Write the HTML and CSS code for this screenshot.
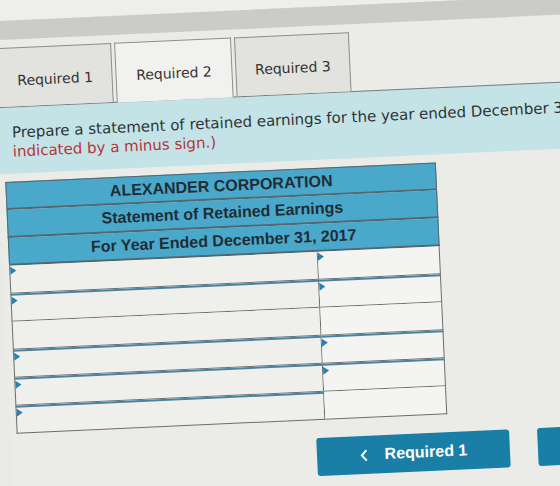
FILE: index.html
```html
<!doctype html>
<html>
<head>
<meta charset="utf-8">
<title>Required 2</title>
<link rel="stylesheet" href="styles.css">
</head>

<body>
<div class="screen">
	<div class="top-strip"></div>
	<div class="band"></div>

	<div class="tabs">
		<div class="tab">Required 1</div>
		<div class="tab active">Required 2</div>
		<div class="tab">Required 3</div>
	</div>

	<div class="prompt">
		Prepare a statement of retained earnings for the year ended December 31, 2017. <span class="note">(Amounts to be deducted should be</span><br>
		<span class="note">indicated by a minus sign.)</span>
	</div>

	<div class="sheet">
		<div class="head-row">ALEXANDER CORPORATION</div>
		<div class="head-row">Statement of Retained Earnings</div>
		<div class="head-row">For Year Ended December 31, 2017</div>
		<div class="rows">
			<div class="cell label sel"></div><div class="cell amount sel"></div>
			<div class="cell label sel"></div><div class="cell amount sel"></div>
			<div class="cell label"></div><div class="cell amount"></div>
			<div class="cell label sel"></div><div class="cell amount sel"></div>
			<div class="cell label sel"></div><div class="cell amount sel"></div>
			<div class="cell label sel"></div><div class="cell amount"></div>
		</div>
	</div>

	<div class="nav">
		<button class="nav-btn">
			<svg width="8" height="13" viewBox="0 0 8 13"><path d="M6.5 1.2 1.8 6.5l4.7 5.3" fill="none" stroke="#fff" stroke-width="2"/></svg>
			Required 1
		</button>
		<button class="nav-btn">Required 3</button>
	</div>
</div>
</body>
</html>
```

FILE: styles.css
```css
html, body {
	margin: 0;
	height: 486px;
	overflow: hidden;
	background: #e9e9e6;
}

/* the whole sheet sits at a slight tilt */
.screen {
	width: 720px;
	min-height: 600px;
	margin-left: -10px;
	background: #ebebe8;
	transform: rotate(-2.6deg);
	transform-origin: 10px 0;
	font-family: "DejaVu Sans", Verdana, sans-serif;
	color: #333;
}

.top-strip {
	height: 21px;
	background: #eeeeec;
}
.band {
	height: 19px;
	background: #cbcbc8;
}

.tabs {
	display: flex;
	align-items: flex-end;
	gap: 3px;
	margin-top: 8px;
	padding-left: 4px;
}
.tab {
	box-sizing: border-box;
	width: 115px;
	height: 59px;
	padding-top: 5px;
	display: flex;
	align-items: center;
	justify-content: center;
	border: 1px solid #8d8d8a;
	border-bottom: none;
	background: #e2e2df;
	font-size: 14px;
	color: #333;
}
.tab.active {
	width: 117px;
	height: 60px;
	margin-bottom: -1px;
	background: #f1f1ef;
	position: relative;
	z-index: 1;
}

.prompt {
	border-top: 1px solid #7d7d7b;
	background: #c4e3e6;
	padding: 16px 0 12px 16px;
	font-size: 15px;
	line-height: 19px;
	white-space: nowrap;
	color: #2f3336;
}
.prompt .note {
	color: #b8343a;
}

.sheet {
	width: 431px;
	margin: 8px 0 0 7px;
	font-family: "Liberation Sans", Arial, sans-serif;
}
.head-row {
	box-sizing: border-box;
	height: 28px;
	line-height: 26px;
	text-align: center;
	font-size: 16px;
	font-weight: bold;
	color: #1f2d35;
	background: #4aa9cb;
	border: 1px solid #56666d;
	border-top: none;
	border-bottom-width: 2px;
}
.head-row:first-child {
	border-top: 1px solid #56666d;
}

.rows {
	display: grid;
	grid-template-columns: 309px 122px;
}
.cell {
	box-sizing: border-box;
	height: 28px;
	position: relative;
	border-right: 1px solid #6c6c6a;
	border-bottom: 1px solid #6c6c6a;
	background: #efefec;
}
.cell.label {
	border-left: 1px solid #6c6c6a;
}
.cell.amount {
	background: #f4f4f2;
}
/* dropdown cells below the first row carry a heavier top rule */
.rows .sel:nth-child(n+3) {
	border-top: 2px solid #4a82a0;
}
.cell.sel::before {
	content: '';
	position: absolute;
	left: 0;
	top: 1px;
	border-left: 6px solid #2a80b1;
	border-top: 4px solid transparent;
	border-bottom: 4px solid transparent;
}

.nav {
	display: flex;
	gap: 28px;
	margin-top: 18px;
	padding-left: 306px;
}
.nav-btn {
	box-sizing: border-box;
	width: 204px;
	height: 38px;
	display: flex;
	align-items: center;
	justify-content: center;
	gap: 17px;
	border: none;
	border-radius: 3px;
	background: #1a7fa7;
	color: #fff;
	font-family: "Liberation Sans", Arial, sans-serif;
	font-size: 16px;
	font-weight: bold;
	padding: 0;
}
```
